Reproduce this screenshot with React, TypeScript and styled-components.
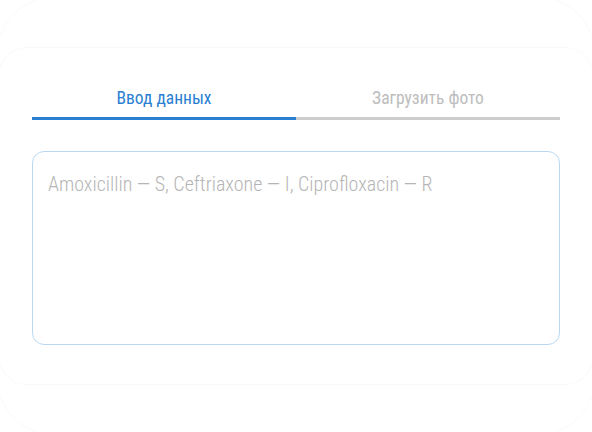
import React, { useState } from "react";
import styled, { createGlobalStyle } from "styled-components";

const Global = createGlobalStyle`
  html, body { margin: 0; padding: 0; background: #ffffff; }
  body { font-family: "Roboto Condensed", "Liberation Sans Narrow", Roboto, "Noto Sans", sans-serif; }
  * { box-sizing: border-box; }
`;

const Screen = styled.div`
  position: relative;
  width: 592px;
  height: 432px;
  overflow: hidden;
  background: #ffffff;
  padding: 78px 32px 0;
  &::before, &::after {
    content: "";
    position: absolute;
    pointer-events: none;
    border: 1px dotted #f3f3f3;
  }
  &::before {
    left: -4px; right: -4px; top: -4px; bottom: -4px;
    border-radius: 60px;
  }
  &::after {
    left: -2px; right: -2px; top: 47px; bottom: 47px;
    border-radius: 30px;
  }
`;

const Tabs = styled.div`
  display: grid;
  grid-template-columns: 1fr 1fr;
`;

const Tab = styled.button<{ $active: boolean }>`
  appearance: none;
  border: 0;
  background: transparent;
  padding: 10px 0 9px;
  font-family: inherit;
  font-size: 17.5px;
  font-weight: 400;
  line-height: 20px;
  color: ${(p) => (p.$active ? "#2b7fd2" : "#bdbdbd")};
  border-bottom: 3px solid ${(p) => (p.$active ? "#2b7fd2" : "#cdcdcd")};
  cursor: pointer;
`;

const Field = styled.textarea`
  display: block;
  width: 100%;
  height: 194px;
  margin-top: 31px;
  padding: 18px 15px;
  border: 1px solid #b9d7f1;
  border-radius: 12px;
  resize: none;
  outline: none;
  font-family: inherit;
  font-size: 20px;
  font-weight: 300;
  line-height: 28px;
  color: #333;
  background: #fff;
  &::placeholder { color: #b5b5b5; }
`;

export default function App() {
  const [tab, setTab] = useState(0);
  return (
    <>
      <Global />
      <Screen>
        <Tabs>
          <Tab $active={tab === 0} onClick={() => setTab(0)}>Ввод данных</Tab>
          <Tab $active={tab === 1} onClick={() => setTab(1)}>Загрузить фото</Tab>
        </Tabs>
        <Field placeholder="Amoxicillin — S, Ceftriaxone — I, Ciprofloxacin — R" />
      </Screen>
    </>
  );
}
